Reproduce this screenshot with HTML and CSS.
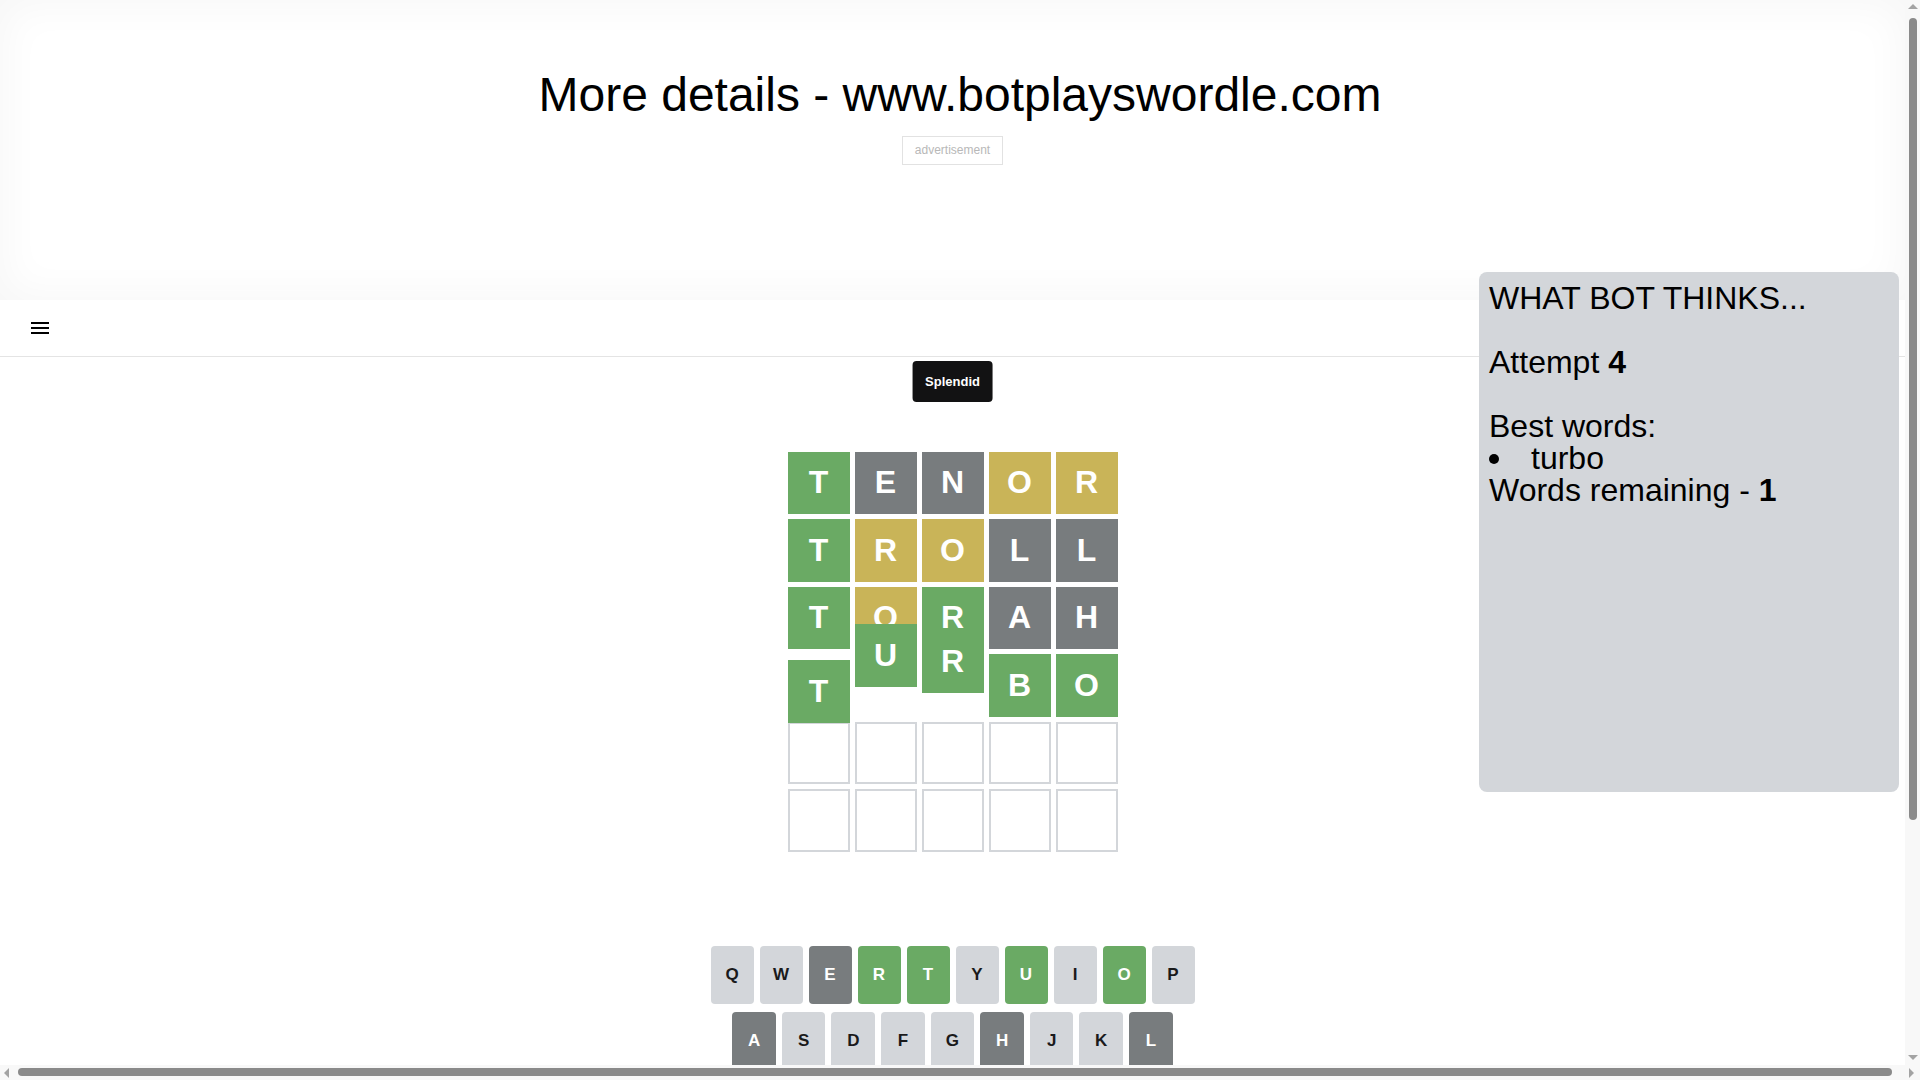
FILE: index.html
```html
<!DOCTYPE html>
<html lang="en">
<head>
<meta charset="utf-8">
<title>Bot plays Wordle</title>
<link rel="stylesheet" href="styles.css">
</head>
<body>
<div class="page">
  <div class="ad-top">
    <h1 class="promo">More details - www.botplayswordle.com</h1>
    <div class="ad-label">advertisement</div>
  </div>

  <header class="topbar">
    <button class="menu-btn" aria-label="menu">
      <svg width="24" height="24" viewBox="0 0 24 24"><path d="M3 18h18v-2H3v2zm0-5h18v-2H3v2zm0-7v2h18V6H3z" fill="#000"/></svg>
    </button>
  </header>

  <main class="game">
    <div class="toast">Splendid</div>
    <div class="board-wrap">
      <div class="board">
        <div class="row">
          <div class="tile correct">T</div>
          <div class="tile absent">E</div>
          <div class="tile absent">N</div>
          <div class="tile present">O</div>
          <div class="tile present">R</div>
        </div>
        <div class="row">
          <div class="tile correct">T</div>
          <div class="tile present">R</div>
          <div class="tile present">O</div>
          <div class="tile absent">L</div>
          <div class="tile absent">L</div>
        </div>
        <div class="row">
          <div class="tile correct">T</div>
          <div class="tile present">O</div>
          <div class="tile correct">R</div>
          <div class="tile absent">A</div>
          <div class="tile absent">H</div>
        </div>
        <div class="row">
          <div class="tile correct bounce-a">T</div>
          <div class="tile correct bounce-b">U</div>
          <div class="tile correct bounce-c">R</div>
          <div class="tile correct">B</div>
          <div class="tile correct">O</div>
        </div>
        <div class="row">
          <div class="tile empty"></div>
          <div class="tile empty"></div>
          <div class="tile empty"></div>
          <div class="tile empty"></div>
          <div class="tile empty"></div>
        </div>
        <div class="row">
          <div class="tile empty"></div>
          <div class="tile empty"></div>
          <div class="tile empty"></div>
          <div class="tile empty"></div>
          <div class="tile empty"></div>
        </div>
      </div>
    </div>

    <div class="keyboard">
      <div class="krow">
        <button class="key">q</button>
        <button class="key">w</button>
        <button class="key absent">e</button>
        <button class="key correct">r</button>
        <button class="key correct">t</button>
        <button class="key">y</button>
        <button class="key correct">u</button>
        <button class="key">i</button>
        <button class="key correct">o</button>
        <button class="key">p</button>
      </div>
      <div class="krow">
        <div class="spacer"></div>
        <button class="key absent">a</button>
        <button class="key">s</button>
        <button class="key">d</button>
        <button class="key">f</button>
        <button class="key">g</button>
        <button class="key absent">h</button>
        <button class="key">j</button>
        <button class="key">k</button>
        <button class="key absent">l</button>
        <div class="spacer"></div>
      </div>
    </div>
  </main>

  <aside class="bot-panel">
    <div class="bp-gap">WHAT BOT THINKS...</div>
    <div class="bp-gap">Attempt <b>4</b></div>
    <div>Best words:</div>
    <ul class="bp-list"><li>turbo</li></ul>
    <div>Words remaining - <b>1</b></div>
  </aside>
</div>

<div class="vscroll">
  <span class="arrow-up"></span>
  <span class="vthumb"></span>
  <span class="arrow-down"></span>
</div>
<div class="hscroll">
  <span class="arrow-left"></span>
  <span class="hthumb"></span>
  <span class="arrow-right"></span>
</div>
</body>
</html>
```

FILE: styles.css
```css
html, body {
  margin: 0;
  padding: 0;
}
body {
  font-family: "Liberation Sans", Arial, Helvetica, sans-serif;
  color: #000;
  background: #fff;
  overflow: hidden;
}
.page {
  position: relative;
  width: calc(100vw - 15px);
  height: 100vh;
}

/* top ad block */
.ad-top {
  height: 300px;
  box-sizing: border-box;
  padding-top: 67px;
  text-align: center;
  background: #fff;
  box-shadow: inset 0 0 40px 6px rgba(0, 0, 0, 0.035);
}
.promo {
  width: 100vw;
  margin: 0;
  font-size: 48px;
  font-weight: 400;
  line-height: 55px;
  text-align: center;
}
.ad-label {
  display: inline-block;
  margin-top: 14px;
  padding: 6px 12px;
  font-size: 12px;
  line-height: 15px;
  color: #b8b8b8;
  border: 1px solid #e2e2e2;
  background: #fff;
}

/* header */
.topbar {
  height: 56px;
  border-bottom: 1px solid #e4e4e4;
  display: flex;
  align-items: center;
  padding-left: 28px;
}
.menu-btn {
  border: none;
  background: none;
  padding: 0;
  width: 24px;
  height: 24px;
  display: block;
}
.menu-btn svg { display: block; }

/* game */
.game {
  position: relative;
}
.toast {
  position: absolute;
  top: 4px;
  left: 50%;
  transform: translateX(-50%);
  background: #121213;
  color: #fff;
  font-weight: 700;
  font-size: 13px;
  line-height: 15px;
  padding: 13px;
  border-radius: 4px;
  white-space: nowrap;
}
.board-wrap {
  height: 589px;
  display: flex;
  align-items: center;
  justify-content: center;
}
.board {
  width: 350px;
  height: 420px;
  padding: 10px;
  box-sizing: border-box;
  display: grid;
  grid-template-rows: repeat(6, 1fr);
  gap: 5px;
}
.row {
  display: grid;
  grid-template-columns: repeat(5, 1fr);
  gap: 5px;
}
.tile {
  display: flex;
  align-items: center;
  justify-content: center;
  box-sizing: border-box;
  font-size: 32px;
  font-weight: 700;
  color: #fff;
  text-transform: uppercase;
}
.tile.empty { border: 2px solid #d3d6da; background: #fff; }
.tile.correct { background: #6aaa64; }
.tile.present { background: #c9b458; }
.tile.absent { background: #787c7e; }
.bounce-a { transform: translateY(6px); }
.bounce-b { transform: translateY(-30px); }
.bounce-c { transform: translateY(-24px); }

/* keyboard */
.keyboard {
  width: 500px;
  margin: 0 auto;
  padding: 0 8px;
  box-sizing: border-box;
}
.krow {
  display: flex;
  margin: 0 auto 8px;
}
.key {
  flex: 1;
  height: 58px;
  margin: 0 6px 0 0;
  padding: 0;
  border: 0;
  border-radius: 4px;
  background: #d3d6da;
  color: #1a1a1b;
  font-family: "Liberation Sans", Arial, sans-serif;
  font-size: 17px;
  font-weight: 700;
  text-transform: uppercase;
  display: flex;
  align-items: center;
  justify-content: center;
}
.key:last-of-type { margin: 0; }
.key.correct { background: #6aaa64; color: #fff; }
.key.absent { background: #787c7e; color: #fff; }
.spacer { flex: 0.5; }

/* bot panel */
.bot-panel {
  position: absolute;
  top: 272px;
  right: 6px;
  width: 400px;
  height: 500px;
  padding: 10px;
  background: #d3d6da;
  border-radius: 8px;
  font-size: 32px;
  line-height: 32px;
  color: #000;
}
.bp-gap { margin-bottom: 32px; }
.bp-list {
  margin: 0;
  padding: 0;
  list-style: none;
}
.bp-list li::before {
  content: "";
  display: inline-block;
  width: 10px;
  height: 10px;
  border-radius: 50%;
  background: #000;
  margin-right: 32px;
  vertical-align: middle;
  position: relative;
  top: -2px;
}

/* browser scrollbars */
.vscroll {
  position: fixed;
  top: 0;
  right: 0;
  width: 15px;
  height: 1065px;
  background: #f8f8f8;
}
.vthumb {
  position: absolute;
  left: 4px;
  top: 18px;
  width: 8px;
  height: 802px;
  border-radius: 4px;
  background: #8a8a8a;
}
.arrow-up, .arrow-down {
  position: absolute;
  left: 3px;
  width: 0;
  height: 0;
  border-left: 5px solid transparent;
  border-right: 5px solid transparent;
}
.arrow-up { top: 4px; border-bottom: 5px solid #a3a3a3; }
.arrow-down { bottom: 5px; border-top: 5px solid #a3a3a3; }
.hscroll {
  position: fixed;
  left: 0;
  bottom: 0;
  width: 100vw;
  height: 15px;
  background: #f8f8f8;
}
.hthumb {
  position: absolute;
  left: 18px;
  top: 3px;
  width: 1874px;
  height: 8px;
  border-radius: 4px;
  background: #8a8a8a;
}
.arrow-left, .arrow-right {
  position: absolute;
  top: 3px;
  width: 0;
  height: 0;
  border-top: 5px solid transparent;
  border-bottom: 5px solid transparent;
}
.arrow-left { left: 4px; border-right: 5px solid #a3a3a3; }
.arrow-right { right: 6px; border-left: 5px solid #a3a3a3; }
```
